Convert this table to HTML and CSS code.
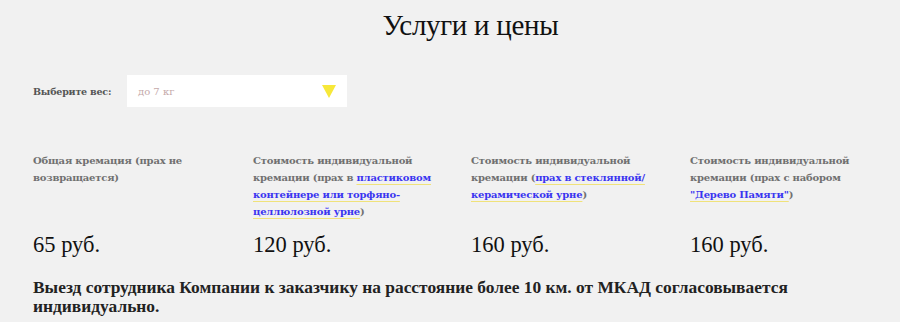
FILE: index.html
```html
<!DOCTYPE html>
<html lang="ru">
<head>
<meta charset="utf-8">
<title>Услуги и цены</title>
<link rel="stylesheet" href="styles.css">
</head>
<body>
<div class="page">
  <h1 class="title">Услуги и цены</h1>
  <div class="weight">
    <span class="weight-label">Выберите вес:</span>
    <div class="select">
      <span class="select-value">до 7 кг</span>
      <svg class="select-arrow" width="14" height="14" viewBox="0 0 14 14"><polygon points="0,1 14,1 7,14" fill="#f7e83a"/></svg>
    </div>
  </div>
  <div class="prices">
    <div class="item">
      <p class="item-desc">Общая кремация (прах не возвращается)</p>
      <p class="item-price">65 руб.</p>
    </div>
    <div class="item">
      <p class="item-desc">Стоимость индивидуальной кремации (прах в <a href="#" class="link">пластиковом контейнере или торфяно-целлюлозной урне</a>)</p>
      <p class="item-price">120 руб.</p>
    </div>
    <div class="item">
      <p class="item-desc">Стоимость индивидуальной кремации (<a href="#" class="link">прах в стеклянной/ керамической урне</a>)</p>
      <p class="item-price">160 руб.</p>
    </div>
    <div class="item">
      <p class="item-desc">Стоимость индивидуальной кремации (прах с набором <a href="#" class="link">"Дерево Памяти"</a>)</p>
      <p class="item-price">160 руб.</p>
    </div>
  </div>
  <p class="note">Выезд сотрудника Компании к заказчику на расстояние более 10 км. от МКАД согласовывается индивидуально.</p>
</div>
</body>
</html>
```

FILE: styles.css
```css
html, body {
  margin: 0;
  padding: 0;
  background: #f1f1f1;
}
.page {
  padding: 8px 0 0 33px;
  font-family: "DejaVu Serif", serif;
}
.title {
  margin: 0 -8px 0 0;
  text-align: center;
  font-family: "Liberation Serif", serif;
  font-weight: normal;
  font-size: 29px;
  line-height: 34px;
  color: #111;
  letter-spacing: -0.3px;
}
.weight {
  display: flex;
  align-items: center;
  margin-top: 33px;
}
.weight-label {
  font-size: 9.5px;
  font-weight: bold;
  color: #555;
  width: 94px;
  letter-spacing: -0.2px;
}
.select {
  width: 220px;
  height: 32px;
  background: #fff;
  display: flex;
  align-items: center;
  justify-content: space-between;
  box-sizing: border-box;
  padding: 0 11px 0 11px;
}
.select-value {
  font-size: 10px;
  color: #c4a9a9;
}
.select-arrow {
  display: block;
}
.prices {
  display: grid;
  grid-template-columns: 220px 218px 219px 190px;
  margin-top: 45px;
}
.item-desc {
  margin: 0;
  width: 186px;
  font-size: 10px;
  line-height: 17px;
  font-weight: bold;
  color: #707070;
  height: 68px;
  letter-spacing: -0.2px;
}
.link {
  color: #3a35f0;
  text-decoration: underline;
  text-decoration-color: #f0e27a;
  text-underline-offset: 3px;
}
.item-price {
  margin: 12px 0 0 0;
  font-family: "Liberation Serif", serif;
  font-size: 22.5px;
  line-height: 26px;
  color: #111;
}
.note {
  margin: 20px 0 0 0;
  font-family: "Liberation Serif", serif;
  font-weight: bold;
  font-size: 17.4px;
  line-height: 19px;
  color: #222;
  width: 820px;
}
```
